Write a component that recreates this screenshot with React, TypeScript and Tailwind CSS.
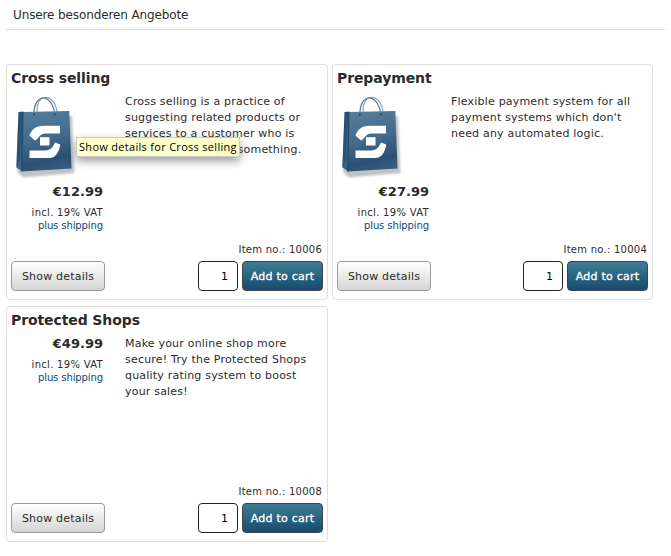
type Product = {
  name: string;
  price: string;
  itemNo: string;
  lines: string[];
  image: boolean;
  tooltip?: string;
};

const products: Product[] = [
  {
    name: 'Cross selling',
    price: '€12.99',
    itemNo: '10006',
    lines: ['Cross selling is a practice of', 'suggesting related products or', 'services to a customer who is', 'already purchasing something.'],
    image: true,
    tooltip: 'Show details for Cross selling',
  },
  {
    name: 'Prepayment',
    price: '€27.99',
    itemNo: '10004',
    lines: ['Flexible payment system for all', "payment systems which don't", 'need any automated logic.'],
    image: true,
  },
  {
    name: 'Protected Shops',
    price: '€49.99',
    itemNo: '10008',
    lines: ['Make your online shop more', 'secure! Try the Protected Shops', 'quality rating system to boost', 'your sales!'],
    image: false,
  },
];

function ShoppingBag({ id }: { id: string }) {
  return (
    <svg width="64" height="86" viewBox="0 0 64 86" className="block">
      <defs>
        <linearGradient id={`front-${id}`} x1="0.2" y1="0" x2="0.4" y2="1">
          <stop offset="0" stopColor="#547d9d" />
          <stop offset="0.5" stopColor="#416a8c" />
          <stop offset="0.85" stopColor="#2c5074" />
          <stop offset="1" stopColor="#355b7e" />
        </linearGradient>
        <linearGradient id={`side-${id}`} x1="0" y1="0" x2="0" y2="1">
          <stop offset="0" stopColor="#294f72" />
          <stop offset="1" stopColor="#39668b" />
        </linearGradient>
        <filter id={`soft-${id}`} x="-20%" y="-20%" width="140%" height="140%">
          <feGaussianBlur stdDeviation="1" />
        </filter>
      </defs>
      <path d="M8 21 57 20 59.500 77 8 81.500 2 76Z" fill="#777" opacity=".45" filter={`url(#soft-${id})`} />
      <path d="M22 16C22 8 24 2.500 29.500 1.500C36 .5 41 7 42 16" fill="none" stroke="#86a9c1" strokeWidth="1.200" />
      <path d="M3.500 16 8.500 15.500 7.500 75.500 1.300 71.500Z" fill={`url(#side-${id})`} />
      <path d="M3.500 16 5.500 64 1.300 71.500Z" fill="#173957" opacity=".3" />
      <path d="M8 16 54.300 15 56.500 72.500 6.500 75.500Z" fill={`url(#front-${id})`} />
      <path d="M8 16 6.800 75.500" stroke="#1d4060" strokeWidth=".9" />
      <path d="M18.800 18.500C19 10 21.500 3.500 27 2C33 1 38.500 8 39.800 18" fill="none" stroke="#527b98" strokeWidth="1.200" />
      <circle cx="18.800" cy="18.700" r=".9" fill="#173957" />
      <circle cx="39.800" cy="18.300" r=".9" fill="#173957" />
      <path d="M45 29.700V37.500H30.500C24.500 37.500 24 42.500 20 44.500L14.300 39.500C17 33.500 20 29.700 29 29.700Z" fill="white" />
      <rect x="25" y="41.200" width="9.500" height="8.300" fill="white" />
      <path d="M40 46.500 45.300 48.500C44 56 41 62 34 62H14.500V54.500H30C36 54 38 51 40 46.500Z" fill="white" />
    </svg>
  );
}

function ProductCard({ product }: { product: Product }) {
  return (
    <article className="relative flex h-[236px] flex-col rounded-[4px] border border-[#dedede] px-1">
      <h2 className="h-[27px] pt-[3px] text-[14px] leading-[20px] font-bold tracking-[-0.1px] whitespace-nowrap">{product.name}</h2>
      <div className="flex flex-1 items-start">
        <div className="w-[92px] text-right">
          {product.image && (
            <div className="h-[90px] pt-[4px] pl-[4px]">
              <ShoppingBag id={product.itemNo} />
            </div>
          )}
          <p className="text-[13px] leading-[20px] font-bold">{product.price}</p>
          <p className="pt-[4px] text-[10px] leading-[13px] tracking-[0.3px]">incl. 19% VAT</p>
          <p className="text-[10px] leading-[13px] tracking-[-0.1px] text-[#0b4778]">plus shipping</p>
        </div>
        <div className="pt-[2px] pl-[22px] text-[11px] leading-[16px] tracking-[0.2px] whitespace-nowrap">
          {product.lines.map((line) => (
            <p key={line}>{line}</p>
          ))}
        </div>
      </div>
      <p className="pr-px text-right text-[10px] leading-[14px] tracking-[0.25px]">
        <span className="relative top-px">Item no.: {product.itemNo}</span>
      </p>
      <div className="mt-[5px] mb-[8px] flex h-[30px]">
        <button className="w-[94px] rounded-[4px] border border-[#999] bg-linear-to-b from-white to-[#d5d5d5] pt-[2px] text-[11px] tracking-[0.2px] whitespace-nowrap">
          Show details
        </button>
        <input
          aria-label="Quantity"
          defaultValue="1"
          className="ml-auto h-[30px] w-[40px] rounded-[4px] border border-[#222] bg-white pr-[9px] text-right text-[11px] text-black"
        />
        <button className="ml-[4px] w-[81px] rounded-[4px] border border-[#444] bg-linear-to-b from-[#3e7d95] to-[#174b6d] pt-[2px] text-[11px] font-medium tracking-[0.25px] whitespace-nowrap text-white [-webkit-text-stroke:0.3px_white]">
          Add to cart
        </button>
      </div>
      {product.tooltip && (
        <div className="absolute top-[72px] left-[69px] h-[20px] w-[164px] border border-[#c9c9c9] bg-[#ffffc9] pl-[2px] font-['Open_Sans','Noto_Sans',sans-serif] text-[11px] leading-[18px] tracking-[0.3px] whitespace-nowrap text-black shadow-[0_4px_10px_rgba(0,0,0,0.4)]">
          {product.tooltip}
        </div>
      )}
    </article>
  );
}

export default function App() {
  return (
    <main className="h-[556px] w-[671px] overflow-hidden bg-white pl-[6px] font-['DejaVu_Sans',Verdana,sans-serif] text-[#2b2b2b]">
      <header className="mr-[6px] h-[30px] border-b border-[#dedede] pl-[7px]">
        <h1 className="pt-[5px] text-[12px] leading-[20px] tracking-[-0.12px]">Unsere besonderen Angebote</h1>
      </header>
      <section className="grid grid-cols-[322px_321px] gap-x-[4px] gap-y-[6px] pt-[34px]">
        {products.map((product) => (
          <ProductCard key={product.itemNo} product={product} />
        ))}
      </section>
    </main>
  );
}
